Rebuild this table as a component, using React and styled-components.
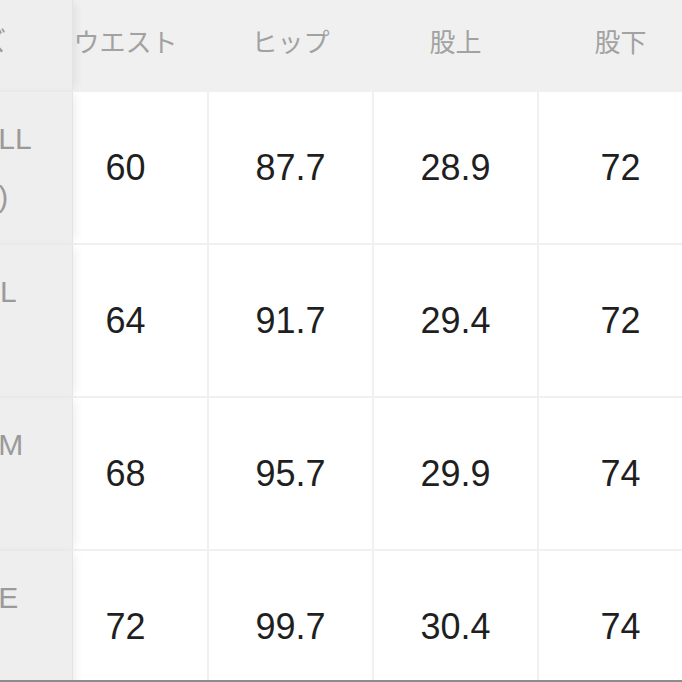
import React from 'react';
import styled, { createGlobalStyle } from 'styled-components';

const GlobalStyle = createGlobalStyle`
  html, body {
    margin: 0;
    padding: 0;
    background: #ffffff;
  }
`

const Page = styled.div`
  width: 682px;
  height: 682px;
  overflow: hidden;
  display: flex;
  flex-direction: column;
  background: #ffffff;
`

// the size table is cropped on its left side, so the viewport starts off screen
const TableViewport = styled.div`
  height: 680px;
  overflow: hidden;
  margin-left: -137px;
  width: calc(100% + 137px);
`

const BottomEdge = styled.div`
  height: 2px;
  background: #8c8c8c;
`

const SizeTable = styled.div`
  display: grid;
  grid-template-columns: 179px repeat(4, 163px);
  grid-template-rows: 90px repeat(4, 151px);
  gap: 2px;
  background: #f0f0f0;
`

const LabelCell = styled.div`
  margin-right: -31px;
  z-index: 1;
  background: #eeeeee;
  border-right: 1px solid #e4e4e4;
  box-shadow: 5px 0 9px -3px rgba(0, 0, 0, 0.08);
  display: flex;
  flex-direction: column;
  align-items: center;
  justify-content: center;
  color: #9a9a9a;
  font-family: ${p => p.$head ? '"Noto Sans CJK JP", "Liberation Sans", sans-serif' : '"Liberation Sans", "Noto Sans CJK JP", sans-serif'};
  font-size: ${p => p.$head ? '26px' : '30px'};
  line-height: ${p => p.$head ? '1' : '58px'};
  padding-bottom: ${p => p.$head ? '10px' : '0'};
  white-space: nowrap;
`

const HeadCell = styled.div`
  background: #f0f0f0;
  display: flex;
  align-items: center;
  justify-content: center;
  padding-bottom: 9px;
  color: #a2a2a2;
  font-family: "Noto Sans CJK JP", "Liberation Sans", sans-serif;
  font-size: 26px;
  white-space: nowrap;
`

const ValueCell = styled.div`
  background: #ffffff;
  display: flex;
  align-items: center;
  justify-content: center;
  color: #1f1f1f;
  font-family: "Liberation Sans", Arial, sans-serif;
  font-size: 36px;
`

const columns = ['ウエスト', 'ヒップ', '股上', '股下']

const rows = [
  { label: ['X-SMALL', '(W60)'], values: ['60', '87.7', '28.9', '72'] },
  { label: ['SMALL', '(S)'], values: ['64', '91.7', '29.4', '72'] },
  { label: ['TYPE M', '(M)'], values: ['68', '95.7', '29.9', '74'] },
  { label: ['LARGE', '(L)'], values: ['72', '99.7', '30.4', '74'] },
]

function App() {
  return (
    <Page>
      <GlobalStyle />
      <TableViewport>
        <SizeTable>
          <LabelCell $head>サイズ</LabelCell>
          {columns.map(c => <HeadCell key={c}>{c}</HeadCell>)}
          {rows.map((row, i) => (
            <React.Fragment key={i}>
              <LabelCell>
                {row.label.map(l => <span key={l}>{l}</span>)}
              </LabelCell>
              {row.values.map((v, j) => <ValueCell key={j}>{v}</ValueCell>)}
            </React.Fragment>
          ))}
        </SizeTable>
      </TableViewport>
      <BottomEdge />
    </Page>
  )
}

export default App;
